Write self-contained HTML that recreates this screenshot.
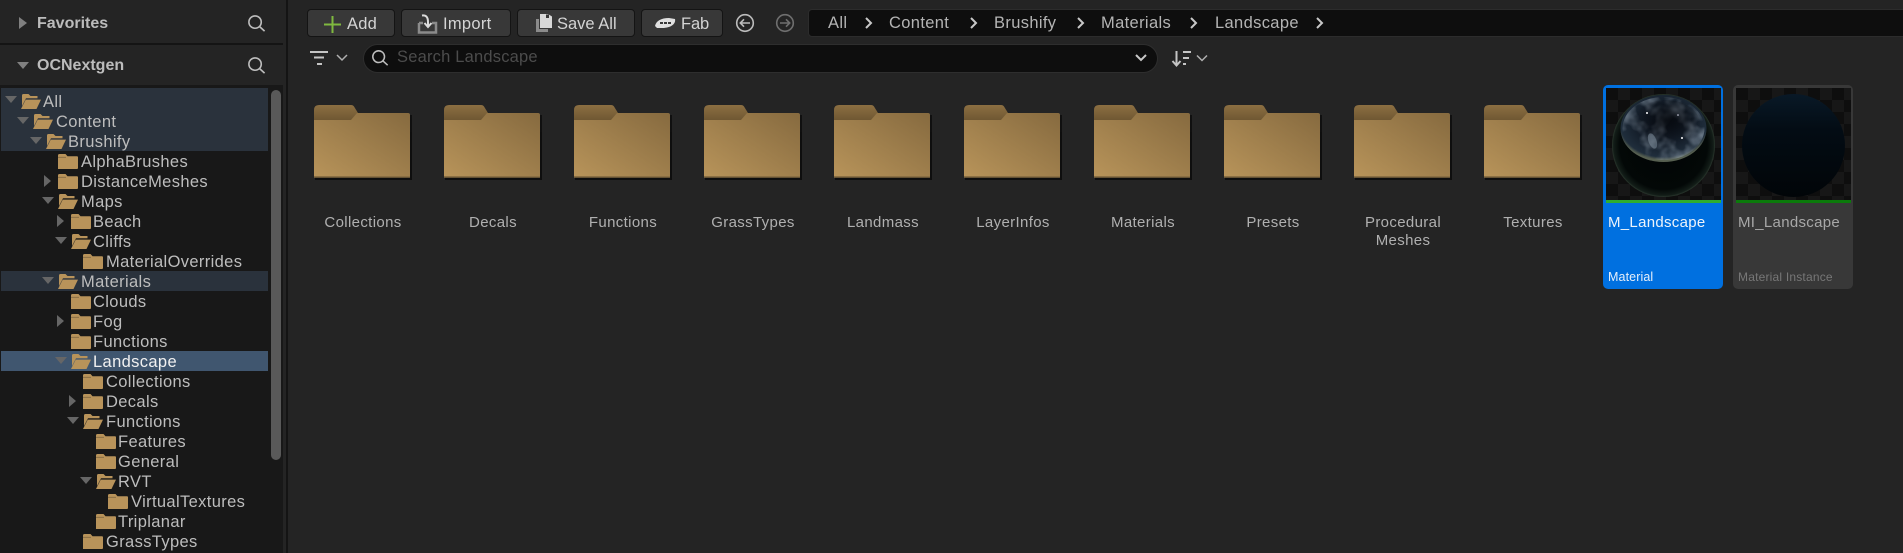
<!DOCTYPE html>
<html><head><meta charset="utf-8">
<style>
html,body{margin:0;padding:0;background:#242424;}
#r{position:relative;width:1903px;height:553px;overflow:hidden;background:#242424;font-family:"Liberation Sans",sans-serif;color:#c0c0c0;}
#r>*{position:absolute;}
.row{position:absolute;height:20px;line-height:20px;margin-top:.5px;font-size:16.5px;white-space:nowrap;color:#bdbdbd;letter-spacing:.36px;}
.hl{position:absolute;left:1px;width:267px;background:#2a323c;}
.fi{position:absolute;width:20px;height:15px;}
.ar{position:absolute;width:0;height:0;}
.ad{border-left:6px solid transparent;border-right:6px solid transparent;border-top:7px solid #666;}
.ar.ar-r{border-top:6px solid transparent;border-bottom:6px solid transparent;border-left:7px solid #666;}
.btn{height:28px;background:#383838;border:1px solid #141414;box-sizing:border-box;border-radius:4px;font-size:16.5px;line-height:28px;color:#d4d4d4;white-space:nowrap;}
.bf{width:100px;height:76px;}
.lab{position:absolute;width:128px;text-align:center;font-size:15px;line-height:18px;color:#b0b0b0;letter-spacing:.35px;}
.card{position:absolute;top:85px;width:120px;height:204px;border-radius:5px;box-sizing:border-box;}
.bc{position:absolute;top:13px;font-size:16.5px;line-height:20px;color:#b4b4b4;letter-spacing:.35px;}
</style></head><body>
<div id="r">
<svg width="0" height="0" style="position:absolute">
<defs>
<symbol id="fc" viewBox="0 0 20 15"><path d="M0 1.500Q0 0 1.500 0H7.500L9.500 2.300H19Q20 2.300 20 3.300V14Q20 15 19 15H0Z" fill="#b8935a"/><path d="M0 3.300H8" stroke="#7f6640" stroke-width=".8"/></symbol>
<symbol id="fo" viewBox="0 0 20 15"><path d="M1 12V1.500Q1 0 2.500 0H7.500L9.500 2H16.500V4.200H5L1 12Z" fill="#b8935a"/><path d="M0 15L4.700 5.600H20L15.500 15Z" fill="#b8935a"/></symbol>
<linearGradient id="fg" x1="0" y1="1" x2="1" y2="0"><stop offset="0" stop-color="#b8945a"/><stop offset="1" stop-color="#866a3f"/></linearGradient>
<linearGradient id="ft" x1="0" y1="0" x2="0" y2="1"><stop offset="0" stop-color="#8c6f42"/><stop offset="1" stop-color="#6d5632"/></linearGradient>
<symbol id="big" viewBox="0 0 100 76"><rect x="1" y="27" width="97" height="48" fill="#0e0e0e"/><path d="M2 8V75H98V10Z" fill="#0e0e0e" opacity=".9"/>
<path d="M0 5Q0 0 5 0H37Q39 0 40 1.500L44 8V16H0Z" fill="url(#ft)"/>
<path d="M0 15H37L43 8H94Q96 8 96 10V72.500H0Z" fill="url(#fg)"/><rect x="0" y="71" width="96" height="1.700" fill="#8a6f44"/></symbol>
<radialGradient id="sp" cx=".5" cy=".5" r=".5"><stop offset="0" stop-color="#010404"/><stop offset=".85" stop-color="#030807"/><stop offset=".97" stop-color="#131d18"/><stop offset="1" stop-color="#2b382e"/></radialGradient>
<radialGradient id="top" cx=".5" cy=".42" r=".55"><stop offset="0" stop-color="#0c111a"/><stop offset=".6" stop-color="#151f2b"/><stop offset=".92" stop-color="#202e3c"/><stop offset="1" stop-color="#565f50"/></radialGradient>
<radialGradient id="dk" cx=".55" cy=".4" r=".5"><stop offset="0" stop-color="#05080d" stop-opacity=".85"/><stop offset="1" stop-color="#05080d" stop-opacity="0"/></radialGradient>
<linearGradient id="mi" x1="0" y1="0" x2="0" y2="1"><stop offset="0" stop-color="#091927"/><stop offset=".35" stop-color="#030c14"/><stop offset="1" stop-color="#010508"/></linearGradient>
<pattern id="ch" width="24" height="24" patternUnits="userSpaceOnUse"><rect width="24" height="24" fill="#0e0e0e"/><rect x="12" width="12" height="12" fill="#171717"/><rect y="12" width="12" height="12" fill="#171717"/></pattern>
<symbol id="se" viewBox="0 0 20 20"><circle cx="8.500" cy="8.500" r="6.500" fill="none" stroke="#bdbdbd" stroke-width="1.700"/><path d="M13.300 13.300L18.500 18" stroke="#bdbdbd" stroke-width="1.700" fill="none"/></symbol>
<filter id="cl" x="0" y="0" width="1" height="1"><feTurbulence type="fractalNoise" baseFrequency=".05" numOctaves="3" seed="7"/><feColorMatrix values="0 0 0 0 .38 0 0 0 0 .46 0 0 0 0 .55 2 0 0 0 -.85"/></filter>
<clipPath id="ec"><ellipse cx="57.500" cy="40.500" rx="41" ry="31.500"/></clipPath>
</defs></svg>

<!-- left panel -->
<div style="left:286px;top:0;width:2px;height:553px;background:#141414"></div>
<div style="left:0;top:43px;width:283px;height:2px;background:#141414"></div>
<div style="left:0;top:85px;width:283px;height:468px;background:#181818"></div>
<div class="ar ar-r" style="left:19px;top:17px;border-left:8px solid #808080"></div>
<div style="left:37px;top:14px;font-size:16px;font-weight:bold;line-height:20px;color:#bcbcbc">Favorites</div>
<svg style="left:247px;top:14px" width="19" height="19"><use href="#se"/></svg>
<div class="ar ad" style="left:17px;top:62px;border-top-color:#808080"></div>
<div style="left:37px;top:56px;font-size:16px;font-weight:bold;line-height:20px;color:#bcbcbc">OCNextgen</div>
<svg style="left:247px;top:56px" width="19" height="19"><use href="#se"/></svg>

<div class="hl" style="top:88px;height:63px"></div>
<div class="hl" style="top:271px;height:20px"></div>
<div class="hl" style="top:351px;height:20px;background:#40566f"></div>
<div style="left:271px;top:90px;width:10px;height:370px;border-radius:5px;background:#595959"></div>

<div class="ar ad" style="left:5px;top:96px"></div><svg class="fi" style="left:21px;top:94px"><use href="#fo"/></svg><div class="row" style="left:43px;top:91px">All</div>
<div class="ar ad" style="left:17px;top:117px"></div><svg class="fi" style="left:33px;top:114px"><use href="#fo"/></svg><div class="row" style="left:56px;top:111px">Content</div>
<div class="ar ad" style="left:30px;top:137px"></div><svg class="fi" style="left:46px;top:134px"><use href="#fo"/></svg><div class="row" style="left:68px;top:131px">Brushify</div>
<svg class="fi" style="left:58px;top:154px"><use href="#fc"/></svg><div class="row" style="left:81px;top:151px">AlphaBrushes</div>
<div class="ar ar-r" style="left:44px;top:175px"></div><svg class="fi" style="left:58px;top:174px"><use href="#fc"/></svg><div class="row" style="left:81px;top:171px">DistanceMeshes</div>
<div class="ar ad" style="left:42px;top:197px"></div><svg class="fi" style="left:58px;top:194px"><use href="#fo"/></svg><div class="row" style="left:81px;top:191px">Maps</div>
<div class="ar ar-r" style="left:57px;top:215px"></div><svg class="fi" style="left:71px;top:214px"><use href="#fc"/></svg><div class="row" style="left:93px;top:211px">Beach</div>
<div class="ar ad" style="left:55px;top:237px"></div><svg class="fi" style="left:71px;top:234px"><use href="#fo"/></svg><div class="row" style="left:93px;top:231px">Cliffs</div>
<svg class="fi" style="left:83px;top:254px"><use href="#fc"/></svg><div class="row" style="left:106px;top:251px">MaterialOverrides</div>
<div class="ar ad" style="left:42px;top:277px"></div><svg class="fi" style="left:58px;top:274px"><use href="#fo"/></svg><div class="row" style="left:81px;top:271px">Materials</div>
<svg class="fi" style="left:71px;top:294px"><use href="#fc"/></svg><div class="row" style="left:93px;top:291px">Clouds</div>
<div class="ar ar-r" style="left:57px;top:315px"></div><svg class="fi" style="left:71px;top:314px"><use href="#fc"/></svg><div class="row" style="left:93px;top:311px">Fog</div>
<svg class="fi" style="left:71px;top:334px"><use href="#fc"/></svg><div class="row" style="left:93px;top:331px">Functions</div>
<div class="ar ad" style="left:55px;top:357px"></div><svg class="fi" style="left:71px;top:354px"><use href="#fo"/></svg><div class="row" style="left:93px;top:351px;color:#f0f0f0">Landscape</div>
<svg class="fi" style="left:83px;top:374px"><use href="#fc"/></svg><div class="row" style="left:106px;top:371px">Collections</div>
<div class="ar ar-r" style="left:69px;top:395px"></div><svg class="fi" style="left:83px;top:394px"><use href="#fc"/></svg><div class="row" style="left:106px;top:391px">Decals</div>
<div class="ar ad" style="left:67px;top:417px"></div><svg class="fi" style="left:83px;top:414px"><use href="#fo"/></svg><div class="row" style="left:106px;top:411px">Functions</div>
<svg class="fi" style="left:96px;top:434px"><use href="#fc"/></svg><div class="row" style="left:118px;top:431px">Features</div>
<svg class="fi" style="left:96px;top:454px"><use href="#fc"/></svg><div class="row" style="left:118px;top:451px">General</div>
<div class="ar ad" style="left:80px;top:477px"></div><svg class="fi" style="left:96px;top:474px"><use href="#fo"/></svg><div class="row" style="left:118px;top:471px">RVT</div>
<svg class="fi" style="left:108px;top:494px"><use href="#fc"/></svg><div class="row" style="left:131px;top:491px">VirtualTextures</div>
<svg class="fi" style="left:96px;top:514px"><use href="#fc"/></svg><div class="row" style="left:118px;top:511px">Triplanar</div>
<svg class="fi" style="left:83px;top:534px"><use href="#fc"/></svg><div class="row" style="left:106px;top:531px">GrassTypes</div>

<!-- toolbar -->
<div class="btn" style="left:307px;top:9px;width:88px"><span style="position:absolute;left:39px;letter-spacing:.2px">Add</span></div>
<svg style="left:324px;top:16px" width="17" height="17"><path d="M8.500 0V17M0 8.500H17" stroke="#7fb93f" stroke-width="2"/></svg>
<div class="btn" style="left:401px;top:9px;width:110px"><span style="position:absolute;left:41px;letter-spacing:.3px">Import</span></div>
<svg style="left:417px;top:14px" width="21" height="20" fill="none"><path d="M2 9H6M15 9H19V18.500H2V9" stroke="#8b8b8b" stroke-width="2.500"/><path d="M5 1.500C9 1 11 3 11 8V12M7.500 9L11 13L14.500 9" stroke="#dcdcdc" stroke-width="2"/></svg>
<div class="btn" style="left:517px;top:9px;width:118px"><span style="position:absolute;left:39px;letter-spacing:0">Save All</span></div>
<svg style="left:535px;top:14px" width="18" height="19"><path d="M1 5H4V15H13V18H1Z" fill="#8b8b8b"/><path d="M5 0H13L17 2.500V14H5Z" fill="#d8d8d8"/><rect x="11" y=".500" width="3" height="3.500" fill="#383838"/></svg>
<div class="btn" style="left:641px;top:9px;width:82px"><span style="position:absolute;left:39px;letter-spacing:-.1px">Fab</span></div>
<svg style="left:655px;top:17px" width="21" height="13"><path d="M0 9C1 4 6 1 14 1L20 2C21 6 17 11 7 11L2 11Z" fill="#e0e0e0"/><path d="M5 6H17" stroke="#383838" stroke-width="2" stroke-dasharray="3 1"/></svg>
<svg style="left:735px;top:13px" width="20" height="20" fill="none" stroke="#bcbcbc" stroke-width="1.600"><circle cx="10" cy="10" r="8.300"/><path d="M15 10H5.500M9 6.300L5.300 10L9 13.700"/></svg>
<svg style="left:775px;top:13px" width="20" height="20" fill="none" stroke="#6f6f6f" stroke-width="1.600"><circle cx="10" cy="10" r="8.300"/><path d="M5 10H14.500M11 6.300L14.700 10L11 13.700"/></svg>

<div style="left:808px;top:9px;width:1110px;height:28px;background:#0e0e0e;border:1px solid #2c2c2c;box-sizing:border-box;border-radius:4px"></div>
<div class="bc" style="left:828px">All</div>
<div class="bc" style="left:889px">Content</div>
<div class="bc" style="left:994px">Brushify</div>
<div class="bc" style="left:1101px">Materials</div>
<div class="bc" style="left:1215px">Landscape</div>
<svg style="left:0;top:0" width="1400" height="40" fill="none" stroke="#c8c8c8" stroke-width="2"><path d="M866 18L871 23L866 28M971 18L976 23L971 28M1078 18L1083 23L1078 28M1191 18L1196 23L1191 28M1317 18L1322 23L1317 28"/></svg>

<svg style="left:309px;top:49px" width="40" height="18" fill="none" stroke-width="2"><path d="M1 3H19" stroke="#c4c4c4"/><path d="M5 8.500H15" stroke="#c4c4c4"/><path d="M8 15H13" stroke="#c4c4c4"/><path d="M28 6L33 11L38 6" stroke="#b0b0b0" stroke-width="1.500"/></svg>
<div style="left:363px;top:44px;width:795px;height:29px;box-sizing:border-box;background:#0e0e0e;border:1px solid #2e2e2e;border-radius:15px"></div>
<svg style="left:371px;top:49px" width="18" height="18"><use href="#se"/></svg>
<div style="left:397px;top:47px;font-size:16.5px;line-height:20px;color:#4c4c4c;letter-spacing:.2px">Search Landscape</div>
<svg style="left:1134px;top:53px" width="14" height="10" fill="none" stroke="#c8c8c8" stroke-width="2"><path d="M2 2L7 7L12 2"/></svg>
<svg style="left:1170px;top:49px" width="42" height="19" fill="none" stroke="#c4c4c4" stroke-width="2"><path d="M6.500 2V16M2.500 12L6.500 16.500L10.500 12M13 3H21M13 9H19M13 15H16"/><path d="M27 6.500L32 11.500L37 6.500" stroke-width="1.500" stroke="#b0b0b0"/></svg>

<!-- folders -->
<svg class="bf" style="left:314px;top:105px"><use href="#big"/></svg>
<svg class="bf" style="left:444px;top:105px"><use href="#big"/></svg>
<svg class="bf" style="left:574px;top:105px"><use href="#big"/></svg>
<svg class="bf" style="left:704px;top:105px"><use href="#big"/></svg>
<svg class="bf" style="left:834px;top:105px"><use href="#big"/></svg>
<svg class="bf" style="left:964px;top:105px"><use href="#big"/></svg>
<svg class="bf" style="left:1094px;top:105px"><use href="#big"/></svg>
<svg class="bf" style="left:1224px;top:105px"><use href="#big"/></svg>
<svg class="bf" style="left:1354px;top:105px"><use href="#big"/></svg>
<svg class="bf" style="left:1484px;top:105px"><use href="#big"/></svg>
<div class="lab" style="left:299px;top:214px">Collections</div>
<div class="lab" style="left:429px;top:214px">Decals</div>
<div class="lab" style="left:559px;top:214px">Functions</div>
<div class="lab" style="left:689px;top:214px">GrassTypes</div>
<div class="lab" style="left:819px;top:214px">Landmass</div>
<div class="lab" style="left:949px;top:214px">LayerInfos</div>
<div class="lab" style="left:1079px;top:214px">Materials</div>
<div class="lab" style="left:1209px;top:214px">Presets</div>
<div class="lab" style="left:1339px;top:214px">Procedural<br>Meshes</div>
<div class="lab" style="left:1469px;top:214px">Textures</div>

<!-- card 1 -->
<div class="card" style="left:1603px;background:#0070e0"></div>
<svg style="left:1606px;top:88px" width="115" height="115">
<rect width="115" height="112" fill="url(#ch)"/>
<rect y="112" width="115" height="3" fill="#2fae2f"/>
<circle cx="57.500" cy="57.500" r="51.500" fill="url(#sp)"/>
<ellipse cx="57.500" cy="40.500" rx="43" ry="33.500" fill="url(#top)"/>
<g clip-path="url(#ec)"><rect x="14" y="7" width="88" height="68" filter="url(#cl)" opacity=".75"/><ellipse cx="60" cy="36" rx="34" ry="24" fill="url(#dk)"/></g>
<ellipse cx="46.500" cy="53" rx="4" ry="8" fill="#8696a4" opacity=".5" transform="rotate(-20 46.500 53)"/>
<circle cx="41" cy="25" r="1" fill="#fff"/><circle cx="72" cy="27" r=".8" fill="#dde"/><circle cx="76" cy="50" r="1" fill="#fff"/>
</svg>
<div style="left:1608px;top:214px;font-size:15px;line-height:18px;color:#eef4fb;letter-spacing:.3px">M_Landscape</div>
<div style="left:1608px;top:269px;font-size:12.500px;line-height:16px;color:#e6effa;letter-spacing:.1px">Material</div>

<!-- card 2 -->
<div class="card" style="left:1733px;background:#383838"></div>
<svg style="left:1736px;top:88px" width="115" height="115">
<rect width="115" height="112" fill="url(#ch)"/>
<rect y="112" width="115" height="3" fill="#0b7a0b"/>
<circle cx="57.500" cy="57.500" r="51.500" fill="url(#mi)"/>
</svg>
<div style="left:1738px;top:214px;font-size:15px;line-height:18px;color:#a8a8a8;letter-spacing:.3px">MI_Landscape</div>
<div style="left:1738px;top:269px;font-size:12px;line-height:16px;color:#777;letter-spacing:.2px">Material Instance</div>
</div>
</body></html>
